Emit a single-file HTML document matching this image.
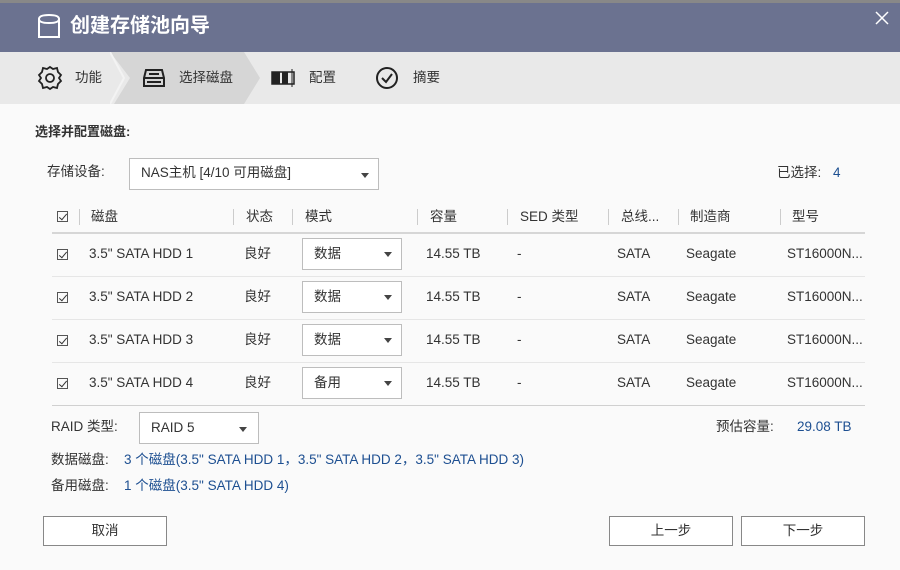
<!DOCTYPE html>
<html><head><meta charset="utf-8"><style>
*{margin:0;padding:0;box-sizing:border-box}
body{width:900px;height:570px;overflow:hidden;background:#fafafa;font-family:"Liberation Sans","Noto Sans CJK SC",sans-serif;font-size:13.5px;color:#333;position:relative}
.a{position:absolute;white-space:nowrap;line-height:16px}
.hdr{left:0;top:0;width:900px;height:52px;background:#6b7290}
.steps{left:0;top:52px;width:900px;height:52px;background:#e9e9e9}
.sel{position:absolute;background:#fff;border:1px solid #bdbdbd}
.tri{position:absolute;width:0;height:0;border-left:4px solid transparent;border-right:4px solid transparent;border-top:5px solid #444}
.blue{color:#1d4f91}
.cb{position:absolute;width:11px;height:11px;border:1px solid #555}
.cb:after{content:"";position:absolute;left:3px;top:0px;width:3px;height:7px;border:solid #333;border-width:0 1px 1px 0;transform:rotate(40deg)}
.sep{position:absolute;width:1px;height:16px;background:#ccc;top:209px}
.btn{position:absolute;border:1px solid #888;background:#fff;height:30px;text-align:center;line-height:28px;font-size:13.5px;width:124px}
</style></head><body>
<div class="a" style="left:0;top:0;width:900px;height:3px;background:#888"></div>
<div class="a hdr" style="top:3px;height:49px"></div>
<svg class="a" style="left:37px;top:13px" width="24" height="26" viewBox="0 0 24 26"><path d="M2 6 Q2 2 12 2 Q22 2 22 6 V24 H2 Z M2 6 Q2 10 12 10 Q22 10 22 6" fill="none" stroke="#fff" stroke-width="2"/></svg>
<div class="a" style="left:70px;top:14px;color:#fff;font-size:20px;font-weight:bold;line-height:24px">创建存储池向导</div>
<svg class="a" style="left:874px;top:10px" width="16" height="16"><path d="M2 2L14 14M14 2L2 14" stroke="#fff" stroke-width="1.5"/></svg>
<div class="a steps"></div>
<svg class="a" style="left:110px;top:52px" width="152" height="52"><polygon points="0,0 134,0 150,26 134,52 4,52 20,26" fill="#d6d6d6"/><polyline points="0,0 14,26 0,52" fill="none" stroke="#f3f3f3" stroke-width="2"/></svg>
<svg class="a" style="left:36px;top:64px" width="28" height="28" viewBox="0 0 28 28"><path d="M14 3 L17 5 L21 4 L22 8 L25 11 L23 14 L25 17 L22 20 L21 24 L17 23 L14 25 L11 23 L7 24 L6 20 L3 17 L5 14 L3 11 L6 8 L7 4 L11 5 Z" fill="none" stroke="#222" stroke-width="1.8"/><circle cx="14" cy="14" r="4" fill="none" stroke="#222" stroke-width="1.8"/></svg>
<div class="a" style="left:75px;top:70px">功能</div>
<svg class="a" style="left:142px;top:68px" width="24" height="20"><path d="M4 2H20L22 10V18H2V10Z M2 10H22 M7 6H17" fill="none" stroke="#222" stroke-width="2"/><rect x="5" y="13" width="14" height="2" fill="#222"/></svg>
<div class="a" style="left:179px;top:70px">选择磁盘</div>
<svg class="a" style="left:271px;top:69px" width="26" height="18"><rect x="1" y="3" width="22" height="12" fill="none" stroke="#222" stroke-width="1.5"/><rect x="1" y="3" width="8" height="12" fill="#222"/><rect x="11" y="3" width="6" height="12" fill="#222"/><line x1="21" y1="0" x2="21" y2="18" stroke="#222"/></svg>
<div class="a" style="left:309px;top:70px">配置</div>
<svg class="a" style="left:375px;top:66px" width="24" height="24"><circle cx="12" cy="12" r="10" fill="none" stroke="#222" stroke-width="2"/><path d="M7 12L11 16L17 8" fill="none" stroke="#222" stroke-width="2"/></svg>
<div class="a" style="left:413px;top:70px">摘要</div>

<div class="a" style="left:35px;top:124px;font-weight:bold;font-size:13px">选择并配置磁盘:</div>
<div class="a" style="left:47px;top:164px">存储设备:</div>
<div class="sel" style="left:129px;top:158px;width:250px;height:32px"></div>
<div class="a" style="left:141px;top:165px">NAS主机 [4/10 可用磁盘]</div>
<div class="tri" style="left:361px;top:173px"></div>
<div class="a" style="left:777px;top:165px">已选择:</div>
<div class="a blue" style="left:833px;top:165px">4</div>

<div class="cb" style="left:57px;top:211px"></div>
<div class="sep" style="left:79px"></div>
<div class="a" style="left:91px;top:209px">磁盘</div>
<div class="sep" style="left:233px"></div>
<div class="a" style="left:246px;top:209px">状态</div>
<div class="sep" style="left:292px"></div>
<div class="a" style="left:305px;top:209px">模式</div>
<div class="sep" style="left:417px"></div>
<div class="a" style="left:430px;top:209px">容量</div>
<div class="sep" style="left:507px"></div>
<div class="a" style="left:520px;top:209px">SED 类型</div>
<div class="sep" style="left:608px"></div>
<div class="a" style="left:621px;top:209px">总线...</div>
<div class="sep" style="left:678px"></div>
<div class="a" style="left:690px;top:209px">制造商</div>
<div class="sep" style="left:780px"></div>
<div class="a" style="left:792px;top:209px">型号</div>
<div class="a" style="left:52px;top:232px;width:813px;height:2px;background:#d6d6d6"></div>

<div class="a" style="left:52px;top:276px;width:813px;height:1px;background:#e6e6e6"></div>
<div class="a" style="left:52px;top:319px;width:813px;height:1px;background:#e6e6e6"></div>
<div class="a" style="left:52px;top:362px;width:813px;height:1px;background:#e6e6e6"></div>
<div class="a" style="left:52px;top:405px;width:813px;height:1px;background:#d0d0d0"></div>

<div class="cb" style="left:57px;top:249px"></div><div class="a" style="left:89px;top:246px">3.5" SATA HDD 1</div><div class="a" style="left:244px;top:246px">良好</div>
<div class="sel" style="left:302px;top:238px;width:100px;height:32px"></div><div class="a" style="left:314px;top:246px">数据</div><div class="tri" style="left:384px;top:252px"></div>
<div class="a" style="left:426px;top:246px">14.55 TB</div><div class="a" style="left:517px;top:246px">-</div><div class="a" style="left:617px;top:246px">SATA</div><div class="a" style="left:686px;top:246px">Seagate</div><div class="a" style="left:787px;top:246px">ST16000N...</div>

<div class="cb" style="left:57px;top:292px"></div><div class="a" style="left:89px;top:289px">3.5" SATA HDD 2</div><div class="a" style="left:244px;top:289px">良好</div>
<div class="sel" style="left:302px;top:281px;width:100px;height:32px"></div><div class="a" style="left:314px;top:289px">数据</div><div class="tri" style="left:384px;top:295px"></div>
<div class="a" style="left:426px;top:289px">14.55 TB</div><div class="a" style="left:517px;top:289px">-</div><div class="a" style="left:617px;top:289px">SATA</div><div class="a" style="left:686px;top:289px">Seagate</div><div class="a" style="left:787px;top:289px">ST16000N...</div>

<div class="cb" style="left:57px;top:335px"></div><div class="a" style="left:89px;top:332px">3.5" SATA HDD 3</div><div class="a" style="left:244px;top:332px">良好</div>
<div class="sel" style="left:302px;top:324px;width:100px;height:32px"></div><div class="a" style="left:314px;top:332px">数据</div><div class="tri" style="left:384px;top:338px"></div>
<div class="a" style="left:426px;top:332px">14.55 TB</div><div class="a" style="left:517px;top:332px">-</div><div class="a" style="left:617px;top:332px">SATA</div><div class="a" style="left:686px;top:332px">Seagate</div><div class="a" style="left:787px;top:332px">ST16000N...</div>

<div class="cb" style="left:57px;top:378px"></div><div class="a" style="left:89px;top:375px">3.5" SATA HDD 4</div><div class="a" style="left:244px;top:375px">良好</div>
<div class="sel" style="left:302px;top:367px;width:100px;height:32px"></div><div class="a" style="left:314px;top:375px">备用</div><div class="tri" style="left:384px;top:381px"></div>
<div class="a" style="left:426px;top:375px">14.55 TB</div><div class="a" style="left:517px;top:375px">-</div><div class="a" style="left:617px;top:375px">SATA</div><div class="a" style="left:686px;top:375px">Seagate</div><div class="a" style="left:787px;top:375px">ST16000N...</div>

<div class="a" style="left:51px;top:419px">RAID 类型:</div>
<div class="sel" style="left:139px;top:412px;width:120px;height:32px"></div>
<div class="a" style="left:151px;top:420px">RAID 5</div>
<div class="tri" style="left:239px;top:427px"></div>
<div class="a" style="left:716px;top:419px">预估容量:</div>
<div class="a blue" style="left:797px;top:419px">29.08 TB</div>
<div class="a" style="left:51px;top:452px">数据磁盘:</div>
<div class="a blue" style="left:124px;top:452px">3 个磁盘(3.5" SATA HDD 1，3.5" SATA HDD 2，3.5" SATA HDD 3)</div>
<div class="a" style="left:51px;top:478px">备用磁盘:</div>
<div class="a blue" style="left:124px;top:478px">1 个磁盘(3.5" SATA HDD 4)</div>

<div class="btn" style="left:43px;top:516px">取消</div>
<div class="btn" style="left:609px;top:516px">上一步</div>
<div class="btn" style="left:741px;top:516px">下一步</div>
</body></html>
